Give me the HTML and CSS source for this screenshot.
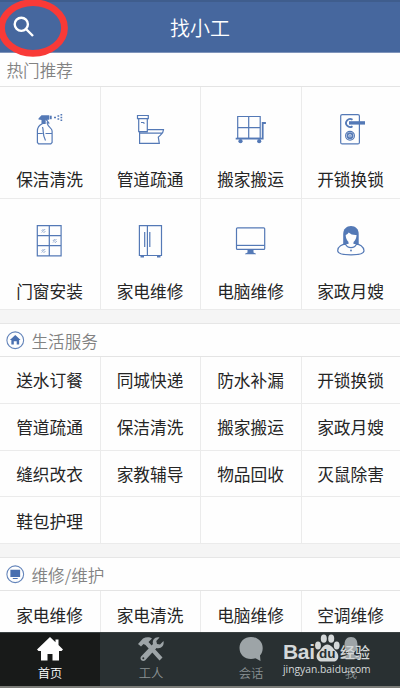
FILE: index.html
```html
<!DOCTYPE html>
<html lang="zh-CN">
<head>
<meta charset="utf-8">
<title>找小工</title>
<link rel="stylesheet" href="styles.css">
</head>
<body>
<div class="app">
  <header class="topbar">
    <svg class="search" viewBox="0 0 22 22"><circle cx="8.3" cy="8.3" r="6.6"/><path d="M13 13l7 7"/></svg>
    <h1>找小工</h1>
    <svg class="marker" viewBox="0 0 80 62"><ellipse cx="33" cy="28" rx="31.5" ry="25.3"/></svg>
  </header>

  <section>
    <h2 class="heading hot">热门推荐</h2>
    <div class="grid tall">
      <div class="cell">
        <svg class="icon" viewBox="0 0 40 40">
          <path class="fill" d="M9.500 8.500L12.500 5.300h7.700v4.400h-2l2.500 3.500-1 .7-3-4.200V14h-4v-4l-3.200-.5z"/><path class="fill" d="M20.700 5.700h2v3.500h-2z"/>
          <path d="M13.300 9.500v4.200c-3.500 1.500-4.900 4-4.900 7.300v11.500l1.200 1.300h12.200l1.300-1.300V21c0-3-3.800-3.500-4.800-7.300V12M8.400 23.500h5.300M16.500 23.500h6.500M13.500 17c1.500 4-.5 7 3 13.500"/>
          <path class="dots" d="M25 7.500h2M28.500 6h1.700M28.500 9h1.700M31.500 4.700h1.700M31.500 7.500h1.700M31.500 10.300h1.700"/>
        </svg><span>保洁清洗</span></div>
      <div class="cell">
        <svg class="icon" viewBox="0 0 40 40"><path d="M7.500 5.500h10.800v3.200H7.500zM8.700 8.700v12.900h8.600V8.700M11 12.500h2.300l1.200 1M17.400 19.700h16.100c0 4-3 5-5.200 7.500l1 6.200H9.600V21.700M9.600 23.200h23"/></svg>
        <span>管道疏通</span></div>
      <div class="cell">
        <svg class="icon" viewBox="0 0 40 40"><path d="M7.700 6.500h22.500v21.800H7.700zM18.700 6.500v21.800M7.700 17.600h22.500"/><path class="bold" d="M5.700 28.700h27V13h3.200"/><circle class="fill" cx="10.500" cy="31.200" r="2.100"/><circle class="fill" cx="29.200" cy="31.200" r="2.100"/></svg>
        <span>搬家搬运</span></div>
      <div class="cell">
        <svg class="icon" viewBox="0 0 40 40"><rect x="10.700" y="4.600" width="18.700" height="29.300" rx="1.500"/><path class="bold" d="M22.500 9.800a4 4 0 1 0 0 6.400"/><path class="lever" d="M19 12.900h16"/><circle cx="20" cy="25.700" r="4.400"/><circle class="bold" cx="20" cy="25.700" r="2.500"/><path d="M20 24.500v2.500"/></svg>
        <span>开锁换锁</span></div>
      <div class="cell">
        <svg class="icon" viewBox="0 0 40 40"><path d="M8.300 3.600h23.800v30.200H8.300zM20.300 3.600v30.200M8.300 13.700h23.800M8.300 23.700h23.800"/><path class="thin" d="M12.500 9l2-2M14.500 11l2-2M12.700 10.500l3.500-3.500M23.800 19l2-2M25.800 21l2-2M24 20.500l3.500-3.500M12.500 29l2-2M14.500 31l2-2M12.700 30.500l3.500-3.500"/></svg>
        <span>门窗安装</span></div>
      <div class="cell">
        <svg class="icon" viewBox="0 0 40 40"><path d="M9.400 3.600h22.100v29.900H9.400zM17.400 3.600v29.900M14.700 10v15M19.800 10v15"/><path class="bold" d="M10.500 34.500h3.500M27 34.500h3.500"/></svg>
        <span>家电维修</span></div>
      <div class="cell">
        <svg class="icon" viewBox="0 0 40 40"><rect x="6.500" y="5.800" width="28.200" height="21.600" rx="1"/><path d="M6.500 23.400h28.200"/><path class="fill" d="M17.500 27.500h6v3l2.500 1.200v.6H15v-.6l2.500-1.200z"/></svg>
        <span>电脑维修</span></div>
      <div class="cell">
        <svg class="icon" viewBox="0 0 40 40"><path class="fill" d="M13.200 22V12C13.200 7 16.500 4 21 4s7.700 3 7.700 8v10z"/><path class="skin" d="M18.500 19.800v2.500L21 24l2.500-1.700v-2.500z"/><path class="skin" d="M15.700 13c1.500-.5 2.300-1.300 3-2.500 2 1.800 4.500 2.700 7.800 2.500 0 4-2.500 8-5.400 8s-5.400-4-5.400-8z"/><path d="M16.500 21.700c-4.500 1-8.500 2-8.800 7 0 2.800 5 4.100 13.300 4.100s13-1.300 13-4.100c-.5-5-4.300-6-8.500-7M15.500 22c1 2.500 3 3.700 5.500 3.700s4.500-1.200 5.500-3.700"/><circle class="fill" cx="21" cy="28.500" r=".9"/></svg>
        <span>家政月嫂</span></div>
    </div>
  </section>

  <section>
    <h2 class="heading">
      <svg class="badge" viewBox="0 0 19 19"><circle cx="9.500" cy="9.500" r="8.600"/><path d="M9.500 4L4 9.200h1.500v4.600H8v-3.300h3v3.300h2.500V9.200H15z"/></svg>生活服务</h2>
    <div class="grid">
      <div class="cell">送水订餐</div><div class="cell">同城快递</div><div class="cell">防水补漏</div><div class="cell">开锁换锁</div>
      <div class="cell">管道疏通</div><div class="cell">保洁清洗</div><div class="cell">搬家搬运</div><div class="cell">家政月嫂</div>
      <div class="cell">缝织改衣</div><div class="cell">家教辅导</div><div class="cell">物品回收</div><div class="cell">灭鼠除害</div>
      <div class="cell">鞋包护理</div><div class="cell"></div><div class="cell"></div><div class="cell"></div>
    </div>
  </section>

  <section>
    <h2 class="heading">
      <svg class="badge" viewBox="0 0 19 19"><circle cx="9.500" cy="9.500" r="8.600"/><path d="M4.500 5h10v7.300h-10zM7 13.300h5v1H7z"/></svg>维修/维护</h2>
    <div class="grid">
      <div class="cell">家电维修</div><div class="cell">家电清洗</div><div class="cell">电脑维修</div><div class="cell">空调维修</div>
    </div>
  </section>

  <nav class="tabs">
    <div class="tab active"><svg viewBox="0 0 28 26"><path d="M14 1L1 13.500l1.500 1.500H5v9.500h6.500V18h5v6.500H23V15h2.500l1.500-1.500-4.500-4.400V3.500h-3v2.800z"/></svg>首页</div>
    <div class="tab"><svg viewBox="0 0 28 26"><path d="M1 8l5-5.500C9 .7 13 1 15 2.500L11.500 6l14 15.500-3 3L8.500 9 6.500 8 4 10.500z"/><path d="M26.500 5L23 8.500l-3-.5-.7-3L22.500 1.500C18 .5 15 4 16 8L4 20.500c-1.500 3 1 5.500 4 4L19.500 12c4.500 1 8-2 7-7z"/><circle class="hole" cx="6.300" cy="22.300" r="1"/></svg>工人</div>
    <div class="tab"><svg viewBox="0 0 28 26"><path d="M14 1C7.500 1 2.500 5.500 2.500 12S7.500 23 14 23c1.500 0 3-.2 4.500-.8L23.500 25l-.5-5.500c1.700-2 2.700-4.500 2.700-7.500C25.700 5.500 20.500 1 14 1z"/></svg>会话</div>
    <div class="tab"><svg viewBox="0 0 28 26"><path d="M14 1c-4.500 0-6.500 3-6.500 8 0 4 1.500 6 3.500 7.500v2L5 21v2h18v-2l-6-2.500v-2c2-1.500 3.500-3.500 3.500-7.500 0-5-2-8-6.500-8z"/></svg>我</div>
  </nav>
  <div class="edge"></div>

  <div class="watermark">
    <div class="brand"><span class="bai">Bai</span>
      <span class="paw"><svg viewBox="0 0 26 28"><ellipse cx="4" cy="11.500" rx="2.900" ry="3.900"/><ellipse cx="9.800" cy="4.700" rx="3" ry="4.100"/><ellipse cx="17.200" cy="4.700" rx="3" ry="4.100"/><ellipse cx="22.700" cy="11.500" rx="2.900" ry="3.900"/><path d="M13.300 10.500c-4 0-5 4-8 6.500-5 4.500-2.500 10.500 2.500 10.500h11.500c5 0 7-6 2.500-10.500-3-2.500-4.500-6.500-8.500-6.500z"/></svg><b>du</b></span>
      <span class="exp">经验</span></div>
    <div class="url">jingyan.baidu.com</div>
  </div>
</div>
</body>
</html>
```
FILE: styles.css
```css
* { box-sizing: border-box; }
body { margin: 0; font-family: "Noto Sans CJK SC", sans-serif; color: #252525; }
.app { position: relative; width: 400px; height: 688px; overflow: hidden; background: #fefefe; display: flex; flex-direction: column; }

.topbar { position: relative; flex: none; height: 53px; display: flex; align-items: center; justify-content: center; background: #46679e; border-top: 2px solid #3f5d8d; border-bottom: 1px solid #7f94bb; color: #fff; }
.topbar h1 { margin: 0; padding-top: 1px; font-size: 20px; font-weight: 350; line-height: 30px; }
.search { position: absolute; left: 13px; top: 14px; width: 22px; height: 22px; fill: none; stroke: #fff; stroke-width: 2.4; }
.marker { position: absolute; left: 0; top: -2px; width: 80px; height: 62px; z-index: 2; fill: none; stroke: #f93a37; stroke-width: 6.8; }

section { flex: none; margin-bottom: 13px; background: #fefefe; box-shadow: 0 13px #f5f5f5; }
.heading { margin: 0; height: 34px; display: flex; align-items: center; gap: 7px; padding: 1px 6px 0; font-size: 16.6px; font-weight: 350; line-height: 24px; color: #828282; border-top: 1px solid #e6e6e6; border-bottom: 1px solid #e4e4e4; }
.heading.hot { border-top: 0; padding: 1px 6.500px 0; }
.badge { flex: none; width: 18.500px; height: 18.500px; fill: #4a70b0; }
.badge circle { fill: none; stroke: #6384ba; stroke-width: 1.1; }

.grid { display: grid; grid-template-columns: 101px 100px 101px 98px; grid-auto-rows: 46.8px; }
.cell { display: flex; align-items: center; justify-content: center; padding: 1px 1px 0 0; font-size: 16.7px; line-height: 24px; border-right: 1px solid #ebebeb; border-bottom: 1px solid #ebebeb; }
.cell:nth-child(4n) { border-right: 0; }
.tall { grid-auto-rows: 111.5px; }
.tall .cell { flex-direction: column; justify-content: flex-start; padding-top: 23px; gap: 17px; }
.icon { flex: none; width: 40px; height: 40px; margin-left: -1px; fill: none; stroke: #5479b6; stroke-width: 1.2; }
.icon .fill { fill: #5479b6; stroke: none; }
.icon .skin { fill: #fefefe; stroke: none; }
.icon .bold { stroke-width: 1.8; }
.icon .lever { stroke-width: 3.4; }
.icon .thin { stroke-width: .6; }
.icon .dots { stroke-width: 1.4; }

.tabs { position: absolute; left: 0; right: 0; bottom: 2px; height: 54px; display: grid; grid-template-columns: repeat(4, 1fr); background: #293032; border-top: 1px solid #3a4142; }
.tab { display: flex; flex-direction: column; align-items: center; padding: 3px 0 0 2px; gap: 2px; font-size: 12.3px; line-height: 18px; font-weight: 350; color: #8b9294; fill: #9da4a7; }
.tab svg { width: 28px; height: 26px; flex: none; }
.tab .hole { fill: #293032; }
.tab.active { padding-left: 0; background: #181a19; color: #fff; fill: #fff; }
.edge { position: absolute; left: 0; right: 0; bottom: 0; height: 2px; background: #7b7c78; }

.watermark { position: absolute; left: 283px; top: 633px; width: 90px; color: #d4d8d9; }
.brand { display: flex; align-items: flex-end; height: 29px; }
.bai { width: 31px; font: bold 21px/21px "Liberation Sans", sans-serif; letter-spacing: -.3px; }
.paw { position: relative; width: 26px; height: 28px; fill: #d4d8d9; }
.paw svg { display: block; width: 26px; height: 28px; }
.paw b { position: absolute; left: 5px; bottom: 1px; font: bold 13.500px/15px "Liberation Sans", sans-serif; color: #293032; }
.exp { font-size: 15px; font-weight: 500; line-height: 21px; white-space: nowrap; }
.url { font: 10.300px/14px "Open Sans", sans-serif; white-space: nowrap; }
```
